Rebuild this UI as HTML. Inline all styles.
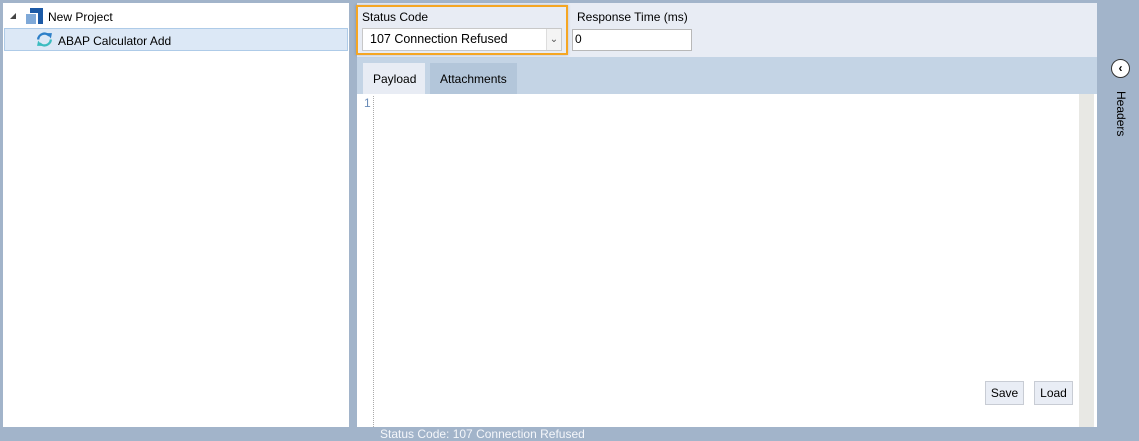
<!DOCTYPE html>
<html><head><style>
*{margin:0;padding:0;box-sizing:border-box}
body{width:1139px;height:441px;background:#a2b4ca;position:relative;overflow:hidden;font-family:"Liberation Sans",sans-serif;font-size:12px;color:#000}
.a{position:absolute}
</style></head><body>
<div class="a" style="left:3px;top:3px;width:346px;height:424px;background:#fff"></div>
<div class="a" style="left:10px;top:13px;width:0;height:0;border-left:6px solid transparent;border-bottom:6px solid #444"></div>
<svg class="a" style="left:26px;top:7px" width="18" height="18"><rect x="0" y="7" width="10" height="10" fill="#7fa9d8"/><path d="M4 1H17V17H12V6H4Z" fill="#1c5aa6"/></svg>
<div class="a" style="left:48px;top:10px">New Project</div>
<div class="a" style="left:4px;top:28px;width:344px;height:23px;background:#dce8f6;border:1px solid #aecbe8"></div>
<svg class="a" style="left:36px;top:31px" width="17" height="17" viewBox="0 0 16 16"><path d="M2 8A6 6 0 0 1 12.5 4.5" stroke="#2d7fc8" stroke-width="2.2" fill="none"/><path d="M10 2L15 2L14 7Z" fill="#2d7fc8"/><path d="M14 8A6 6 0 0 1 3.5 11.5" stroke="#3bbcc0" stroke-width="2.2" fill="none"/><path d="M6 14L1 14L2 9Z" fill="#3bbcc0"/></svg>
<div class="a" style="left:58px;top:34px">ABAP Calculator Add</div>

<div class="a" style="left:357px;top:3px;width:740px;height:55px;background:#e8ecf4"></div>
<div class="a" style="left:357px;top:57px;width:740px;height:37px;background:#c4d4e5"></div>
<div class="a" style="left:363px;top:63px;width:62px;height:31px;background:#e8ecf4"></div>
<div class="a" style="left:373px;top:72px">Payload</div>
<div class="a" style="left:430px;top:63px;width:87px;height:31px;background:#b3c6da"></div>
<div class="a" style="left:440px;top:72px">Attachments</div>
<div class="a" style="left:357px;top:94px;width:740px;height:333px;background:#fff"></div>
<div class="a" style="left:1079px;top:94px;width:15px;height:333px;background:#e8e8e4"></div>
<div class="a" style="left:373px;top:96px;width:0;height:331px;border-left:1px dotted #aaa"></div>
<div class="a" style="left:364px;top:96px;color:#6a8cb8">1</div>

<div class="a" style="left:356px;top:5px;width:212px;height:50px;border:2px solid #f5a623;box-shadow:0 0 3px rgba(0,0,0,.2)"></div>
<div class="a" style="left:362px;top:10px">Status Code</div>
<div class="a" style="left:362px;top:28px;width:200px;height:23px;background:#fff;border:1px solid #c8c8c8"></div>
<div class="a" style="left:370px;top:32px;font-size:12.5px">107 Connection Refused</div>
<div class="a" style="left:546px;top:29px;width:15px;height:21px;border-left:1px solid #ddd;background:#f4f4f4;color:#555;font-size:10px;text-align:center;line-height:21px">&#8964;</div>
<div class="a" style="left:577px;top:10px">Response Time (ms)</div>
<div class="a" style="left:572px;top:29px;width:120px;height:22px;background:#fff;border:1px solid #b8b8b8"></div>
<div class="a" style="left:575px;top:32px">0</div>

<div class="a" style="left:985px;top:381px;width:39px;height:24px;background:#e9edf5;border:1px solid #c8ccd4;text-align:center;line-height:22px">Save</div>
<div class="a" style="left:1034px;top:381px;width:39px;height:24px;background:#e9edf5;border:1px solid #c8ccd4;text-align:center;line-height:22px">Load</div>

<div class="a" style="left:1111px;top:59px;width:19px;height:19px;border-radius:50%;background:#fff;border:1px solid #333;text-align:center;line-height:16px;font-weight:bold;font-size:12px">&#8249;</div>
<div class="a" style="left:1101px;top:104px;transform:rotate(90deg);transform-origin:center;width:40px;text-align:center;font-size:12px">Headers</div>
<div class="a" style="left:380px;top:427px;color:#f4f6fa;font-size:12px">Status Code: 107 Connection Refused</div>
</body></html>
